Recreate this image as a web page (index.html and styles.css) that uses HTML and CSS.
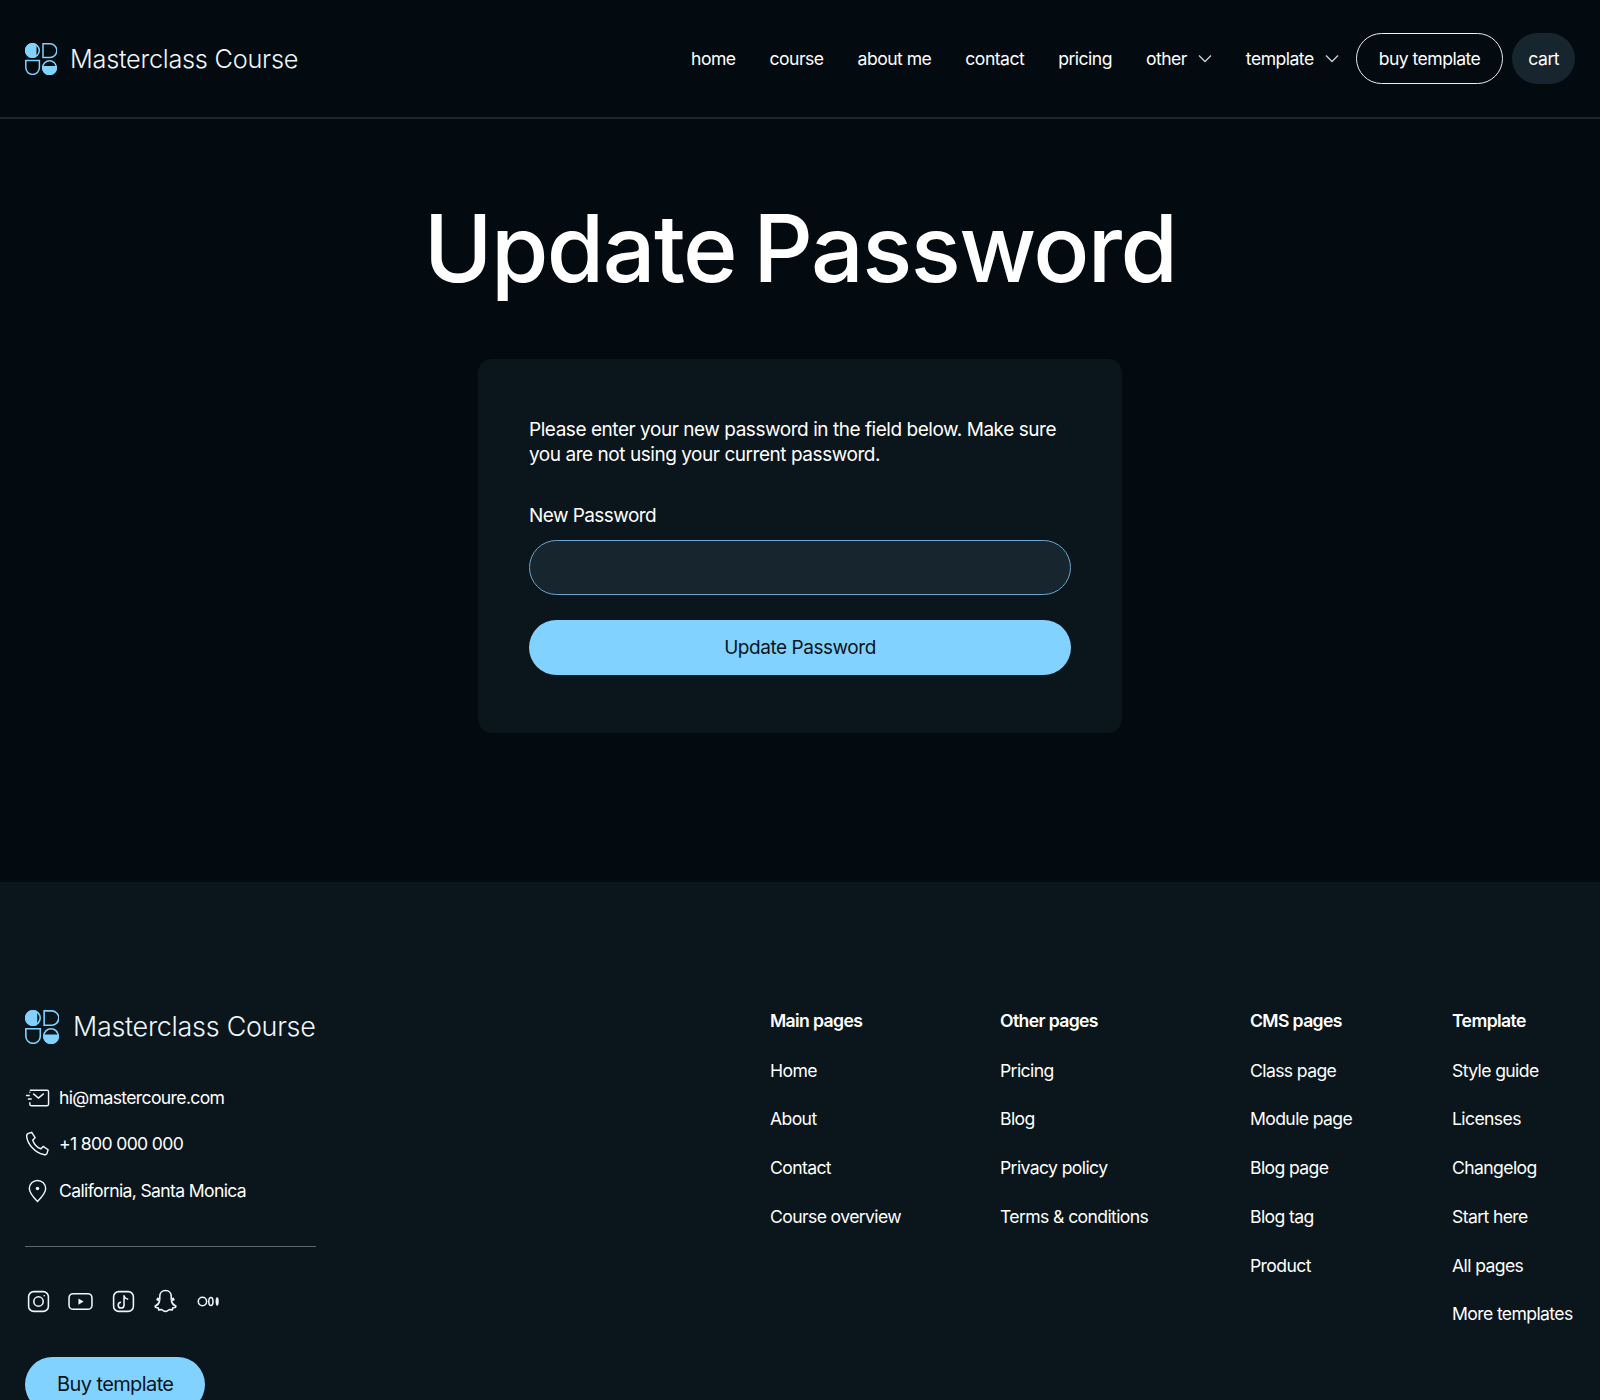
FILE: index.html
```html
<!DOCTYPE html>
<html lang="en">
<head>
  <meta charset="UTF-8" />
  <meta name="viewport" content="width=device-width, initial-scale=1.0"/>
  <title>Update Password – Masterclass Course</title>
  <link rel="stylesheet" href="styles.css">
</head>
<body>

  <svg class="icon-defs" width="0" height="0" aria-hidden="true">
    <symbol id="logo" viewBox="0 0 32 32">
      <circle cx="7.500" cy="7.500" r="6.800" fill="none" stroke="#82d2ff" stroke-width="1.500"/>
      <path d="M11.500 1.170A7.500 7.500 0 1 0 11.500 13.830z" fill="#82d2ff"/>
      <path d="M18 .8h7a6.800 6.800 0 0 1 0 13.600h-7z" fill="none" stroke="#82d2ff" stroke-width="1.500"/>
      <path d="M.8 17.600h13.600v7a6.800 6.800 0 0 1-13.600 0z" fill="none" stroke="#82d2ff" stroke-width="1.500"/>
      <circle cx="24.500" cy="24.500" r="6.800" fill="none" stroke="#82d2ff" stroke-width="1.500"/>
      <path d="M17.200 23a7.500 7.500 0 1 0 14.600 0z" fill="#82d2ff"/>
    </symbol>
  </svg>

  <header class="site-header">
    <a class="brand" href="#">
      <svg class="brand-logo"><use href="#logo"/></svg>
      <span>Masterclass Course</span>
    </a>
    <nav class="main-nav">
      <a href="#">home</a>
      <a href="#">course</a>
      <a href="#">about me</a>
      <a href="#">contact</a>
      <a href="#">pricing</a>
      <a class="has-caret" href="#">other
        <svg class="caret" viewBox="0 0 14 9"><path d="M1 1.500l6 6 6-6"/></svg>
      </a>
      <a class="has-caret" href="#">template
        <svg class="caret" viewBox="0 0 14 9"><path d="M1 1.500l6 6 6-6"/></svg>
      </a>
      <div class="nav-buttons">
        <a class="btn-outline" href="#">buy template</a>
        <a class="btn-cart" href="#">cart</a>
      </div>
    </nav>
  </header>

  <main class="page-main">
    <h1>Update Password</h1>
    <div class="card">
      <p>Please enter your new password in the field below. Make sure you are not using your current password.</p>
      <form>
        <label for="password">New Password</label>
        <input type="password" id="password">
        <button type="button" class="submit-btn">Update Password</button>
      </form>
    </div>
  </main>

  <footer class="site-footer">
    <div class="footer-left">
      <a class="brand brand-large" href="#">
        <svg class="brand-logo"><use href="#logo"/></svg>
        <span>Masterclass Course</span>
      </a>
      <ul class="contact-list">
        <li>
          <svg class="line-icon" viewBox="0 0 26 26"><path d="M5 5.500h18a1.500 1.500 0 0 1 1.500 1.500v13a1.500 1.500 0 0 1-1.500 1.500H6.500A1.500 1.500 0 0 1 5 20v-2M5 8V7M8.500 9l5.500 4.500L19.500 9M1 11h4M3 14.500h4"/></svg>
          hi@mastercoure.com
        </li>
        <li>
          <svg class="line-icon" viewBox="0 0 26 26"><path d="M3.500 2.500l3.500-1 3.500 5.500-2.500 2.500c1.500 4 4.500 7.500 8.500 9l2.500-2.500 5 3.500-1 3.500c-.5 1.500-2 2-3.500 1.500C10 22 3 14 1.800 6c-.2-1.500.4-3 1.700-3.500z"/></svg>
          +1 800 000 000
        </li>
        <li>
          <svg class="line-icon" viewBox="0 0 26 26"><path d="M13 24.500c-4-4-8.500-8.500-8.500-13.500a8.500 8.500 0 0 1 17 0c0 5-4.500 9.500-8.500 13.500z"/><circle class="dot" cx="13" cy="11" r="1.800"/></svg>
          California, Santa Monica
        </li>
      </ul>
      <div class="social-row">
        <svg class="line-icon" viewBox="0 0 24 24"><rect x="2.500" y="2.500" width="19" height="19" rx="5"/><circle cx="12" cy="12" r="4.500"/><circle class="dot" cx="17.500" cy="6.500" r="0.800"/></svg>
        <svg class="line-icon" viewBox="0 0 24 24"><rect x="1" y="4.500" width="22" height="15" rx="4"/><path class="dot" d="M10 9l5 3-5 3z"/></svg>
        <svg class="line-icon" viewBox="0 0 24 24"><rect x="2.500" y="2.500" width="19" height="19" rx="5"/><path d="M12.500 6v9.500a2.800 2.800 0 1 1-2.800-2.800M12.500 6c.3 2 1.700 3.500 4 3.700"/></svg>
        <svg class="line-icon" viewBox="0 0 24 24"><path d="M12 1.500c3.500 0 5.500 2.500 5.500 5.500v2.500l2-.5.500 1.200-2.300 1.300c.5 2.500 2 4 4.300 5l-.5 1.200-2.500.5-.5 1.800-2.800-.2c-1.200.5-2 1.700-3.700 1.700s-2.500-1.200-3.700-1.700l-2.800.2-.5-1.800-2.500-.5-.5-1.200c2.300-1 3.800-2.500 4.300-5L4 10.200l.5-1.200 2 .5V7c0-3 2-5.500 5.500-5.500z"/></svg>
        <svg class="line-icon" viewBox="0 0 24 24"><circle cx="6.200" cy="12" r="4"/><ellipse cx="14.300" cy="12" rx="2" ry="3.800"/><ellipse class="dot" cx="20.300" cy="12" rx="1.500" ry="4"/></svg>
      </div>
      <a class="footer-buy" href="#">Buy template</a>
    </div>

    <div class="footer-links">
      <div class="link-col">
        <h4>Main pages</h4>
        <a href="#">Home</a>
        <a href="#">About</a>
        <a href="#">Contact</a>
        <a href="#">Course overview</a>
      </div>
      <div class="link-col">
        <h4>Other pages</h4>
        <a href="#">Pricing</a>
        <a href="#">Blog</a>
        <a href="#">Privacy policy</a>
        <a href="#">Terms &amp; conditions</a>
      </div>
      <div class="link-col">
        <h4>CMS pages</h4>
        <a href="#">Class page</a>
        <a href="#">Module page</a>
        <a href="#">Blog page</a>
        <a href="#">Blog tag</a>
        <a href="#">Product</a>
      </div>
      <div class="link-col">
        <h4>Template</h4>
        <a href="#">Style guide</a>
        <a href="#">Licenses</a>
        <a href="#">Changelog</a>
        <a href="#">Start here</a>
        <a href="#">All pages</a>
        <a href="#">More templates</a>
      </div>
    </div>
  </footer>

</body>
</html>
```

FILE: styles.css
```css
* {
  box-sizing: border-box;
}

html, body {
  height: 1400px;
  overflow: hidden;
}

body {
  margin: 0;
  font-family: 'Inter', sans-serif;
  font-size: 17.600px;
  letter-spacing: -0.03em;
  background: #030a10;
  color: #fff;
}

a {
  color: inherit;
  text-decoration: none;
}

.icon-defs {
  position: absolute;
}

/* header */
.site-header {
  display: flex;
  align-items: center;
  justify-content: space-between;
  height: 119px;
  padding: 0 25px;
  border-bottom: 2px solid #1b262e;
}

.brand {
  display: flex;
  align-items: center;
  gap: 13px;
  font-size: 25.300px;
  font-weight: 300;
  letter-spacing: -0.01em;
  white-space: nowrap;
  color: #eef6fb;
}

.brand-logo {
  width: 32px;
  height: 32px;
}

.main-nav {
  display: flex;
  align-items: center;
  gap: 34px;
}

.has-caret {
  display: flex;
  align-items: center;
  gap: 11px;
}

.caret {
  width: 14px;
  height: 9px;
  fill: none;
  stroke: #c8d2d8;
  stroke-width: 1.300;
}

.nav-buttons {
  display: flex;
  gap: 9px;
  margin-left: -17px;
}

.btn-outline, .btn-cart {
  display: flex;
  align-items: center;
  height: 51px;
  border-radius: 26px;
}

.btn-outline {
  padding: 0 22px;
  border: 1px solid #e8eef2;
}

.btn-cart {
  padding: 0 16px;
  background: #17252e;
}

/* main */
.page-main {
  display: flex;
  flex-direction: column;
  align-items: center;
  height: 763px;
  padding-top: 69px;
}

h1 {
  margin: 0 0 51px;
  font-size: 93px;
  font-weight: 500;
  letter-spacing: -0.017em;
  word-spacing: -6px;
  line-height: 120px;
}

.card {
  width: 644px;
  padding: 58px 51px;
  background: #0a151c;
  border-radius: 14px;
}

.card p {
  margin: 0 0 36px;
  font-size: 19px;
  letter-spacing: -0.024em;
  line-height: 25px;
}

label {
  display: block;
  margin-bottom: 12px;
  font-size: 19px;
  letter-spacing: -0.03em;
  line-height: 25px;
}

input {
  display: block;
  width: 100%;
  height: 55px;
  margin-bottom: 25px;
  background: #17252e;
  border: 1px solid #6aa8cf;
  border-radius: 28px;
}

.submit-btn {
  display: block;
  width: 100%;
  height: 55px;
  background: #82d2ff;
  border: none;
  border-radius: 28px;
  font-family: inherit;
  font-size: 19px;
  letter-spacing: -0.024em;
  color: #0a151c;
}

/* footer */
.site-footer {
  display: flex;
  justify-content: space-between;
  height: 600px;
  padding: 128px 25px 0;
  background: #0a151c;
}

.footer-left {
  width: 291px;
}

.brand-large {
  gap: 14px;
  font-size: 26.900px;
}

.brand-large .brand-logo {
  width: 34px;
  height: 34px;
}

.brand-large span {
  margin-top: -2px;
}

.contact-list {
  list-style: none;
  margin: 30px 0 0;
  padding: 0 0 32px;
  border-bottom: 1px solid #5c666d;
  letter-spacing: -0.037em;
}

.contact-list li {
  display: flex;
  align-items: center;
  gap: 9px;
  height: 46.600px;
}

.line-icon {
  width: 25px;
  height: 25px;
  fill: none;
  stroke: #eef6fb;
  stroke-width: 1.500;
}

.line-icon .dot {
  fill: #eef6fb;
  stroke: none;
}

.social-row {
  display: flex;
  gap: 17.400px;
  margin-top: 42px;
  padding-left: 1px;
}

.footer-buy {
  display: inline-flex;
  align-items: center;
  height: 55px;
  margin-top: 43px;
  padding: 0 32px;
  background: #82d2ff;
  border-radius: 28px;
  font-size: 20px;
  letter-spacing: -0.03em;
  color: #0a151c;
}

.footer-links {
  display: grid;
  grid-template-columns: 230px 250px 202px 123px;
  align-self: flex-start;
  letter-spacing: -0.035em;
  white-space: nowrap;
}

.link-col {
  display: flex;
  flex-direction: column;
  gap: 26px;
  line-height: 22.700px;
}

.link-col h4 {
  margin: 0 0 1px;
  font-size: 17.600px;
  font-weight: 600;
}
```
